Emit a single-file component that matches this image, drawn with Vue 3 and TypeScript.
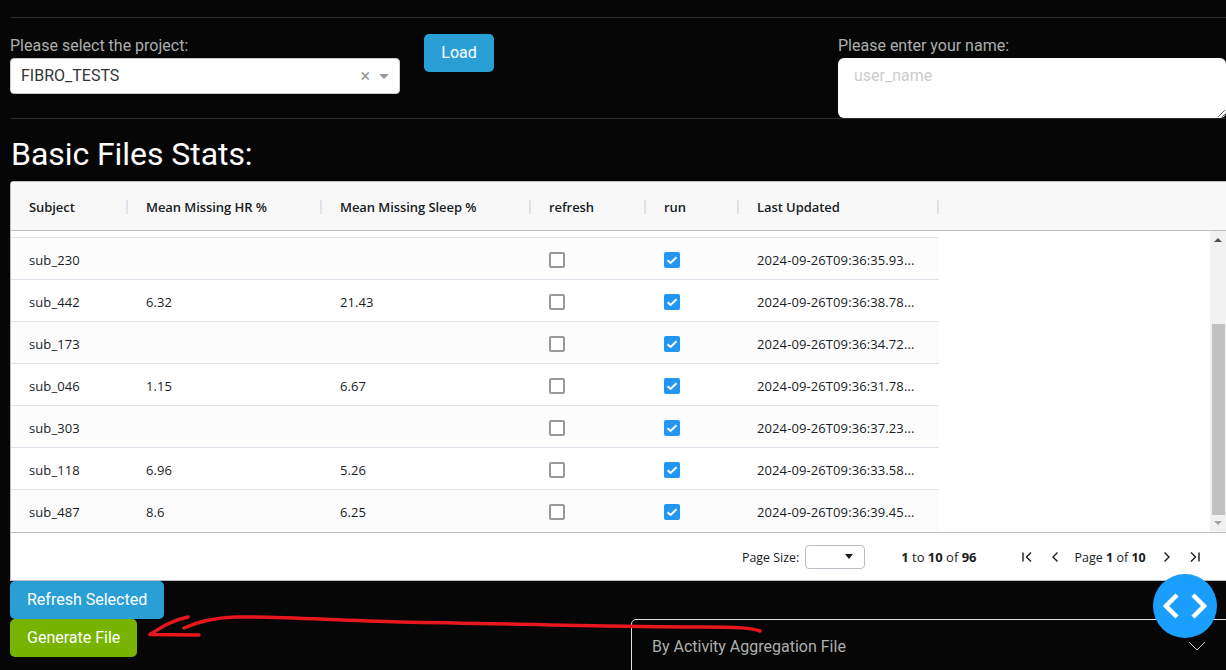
<template>
  <div class="page">
    <hr class="rule" />
    <section class="top-row">
      <div class="project-col">
        <label class="field-label">Please select the project:</label>
        <div class="project-select">
          <span class="project-value">FIBRO_TESTS</span>
          <span class="clear-x">×</span>
          <span class="caret"></span>
        </div>
      </div>
      <button class="btn btn-blue load-btn">Load</button>
      <div class="name-col">
        <label class="field-label">Please enter your name:</label>
        <textarea class="name-input" placeholder="user_name"></textarea>
      </div>
    </section>
    <hr class="rule" />

    <h2 class="title">Basic Files Stats:</h2>

    <div class="grid">
      <div class="grid-header">
        <div v-for="col in columns" :key="col.label" class="head-cell" :style="{ width: col.width + 'px' }">
          {{ col.label }}
        </div>
      </div>
      <div class="grid-body">
        <div class="rows">
          <div v-for="row in rows" :key="row.subject" class="row">
            <div class="cell" :style="{ width: columns[0].width + 'px' }">{{ row.subject }}</div>
            <div class="cell" :style="{ width: columns[1].width + 'px' }">{{ row.hr }}</div>
            <div class="cell" :style="{ width: columns[2].width + 'px' }">{{ row.sleep }}</div>
            <div class="cell" :style="{ width: columns[3].width + 'px' }"><span class="check"></span></div>
            <div class="cell" :style="{ width: columns[4].width + 'px' }">
              <span class="check checked">
                <svg width="16" height="16" viewBox="0 0 16 16">
                  <path d="M3.5 8.2 6.6 11 12.5 5.3" fill="none" stroke="#fff" stroke-width="2" />
                </svg>
              </span>
            </div>
            <div class="cell" :style="{ width: columns[5].width + 'px' }">{{ row.updated }}</div>
          </div>
        </div>
        <div class="scrollbar">
          <span class="arrow arrow-up"></span>
          <span class="thumb"></span>
          <span class="arrow arrow-down"></span>
        </div>
      </div>
      <div class="grid-footer">
        <span>Page Size:</span>
        <span class="size-select"><span class="size-caret"></span></span>
        <span class="row-count"><b>1</b> to <b>10</b> of <b>96</b></span>
        <div class="pager">
          <svg class="pg-icon" width="16" height="16" viewBox="0 0 16 16">
            <path d="M4 3.5v9M12 3.5 7.5 8l4.500 4.500" fill="none" stroke="#181d1f" stroke-width="1.4" />
          </svg>
          <svg class="pg-icon" width="16" height="16" viewBox="0 0 16 16">
            <path d="M10.5 3.5 6 8l4.500 4.500" fill="none" stroke="#181d1f" stroke-width="1.4" />
          </svg>
          <span class="page-text">Page <b>1</b> of <b>10</b></span>
          <svg class="pg-icon" width="16" height="16" viewBox="0 0 16 16">
            <path d="M5.5 3.5 10 8l-4.500 4.500" fill="none" stroke="#181d1f" stroke-width="1.4" />
          </svg>
          <svg class="pg-icon" width="16" height="16" viewBox="0 0 16 16">
            <path d="M12 3.5v9M4 3.5 8.500 8 4 12.500" fill="none" stroke="#181d1f" stroke-width="1.4" />
          </svg>
        </div>
      </div>
    </div>

    <section class="bottom">
      <div class="actions">
        <button class="btn btn-blue">Refresh Selected</button>
        <button class="btn btn-green">Generate File</button>
      </div>
      <div class="accordion">
        <span>By Activity Aggregation File</span>
        <svg class="accordion-chevron" width="18" height="10" viewBox="0 0 18 10">
          <path d="M1 1l8 8 8-8" fill="none" stroke="#c8c8c8" stroke-width="1" />
        </svg>
      </div>
    </section>

    <svg class="scribble" width="1226" height="670" viewBox="0 0 1226 670">
      <path
        d="M760 631C752 628 740 627 700 627C620 627 520 624 400 622C330 620 270 616 235 617C210 618 195 623 184 628M188 617C172 620 160 628 150 634.500L199 635"
        fill="none"
        stroke="#e8161d"
        stroke-width="3.5"
        stroke-linecap="round"
        stroke-linejoin="round"
      />
    </svg>

    <button class="float-btn" aria-label="Toggle dev tools">
      <svg width="44" height="28" viewBox="0 0 44 28">
        <path d="M14 3 3 14l11 11M30 3l11 11-11 11" fill="none" stroke="#fff" stroke-width="4.500" />
      </svg>
    </button>
  </div>
</template>

<script setup lang="ts">
interface Row {
  subject: string;
  hr: string;
  sleep: string;
  updated: string;
}

const columns = [
  { label: "Subject", width: 117 },
  { label: "Mean Missing HR %", width: 194 },
  { label: "Mean Missing Sleep %", width: 209 },
  { label: "refresh", width: 115 },
  { label: "run", width: 93 },
  { label: "Last Updated", width: 200 },
];

const rows: Row[] = [
  { subject: "sub_230", hr: "", sleep: "", updated: "2024-09-26T09:36:35.93..." },
  { subject: "sub_442", hr: "6.32", sleep: "21.43", updated: "2024-09-26T09:36:38.78..." },
  { subject: "sub_173", hr: "", sleep: "", updated: "2024-09-26T09:36:34.72..." },
  { subject: "sub_046", hr: "1.15", sleep: "6.67", updated: "2024-09-26T09:36:31.78..." },
  { subject: "sub_303", hr: "", sleep: "", updated: "2024-09-26T09:36:37.23..." },
  { subject: "sub_118", hr: "6.96", sleep: "5.26", updated: "2024-09-26T09:36:33.58..." },
  { subject: "sub_487", hr: "8.6", sleep: "6.25", updated: "2024-09-26T09:36:39.45..." },
];
</script>

<style scoped>
.page {
  position: relative;
  height: 670px;
  overflow: hidden;
  background: #060606;
  font-family: Roboto, "Liberation Sans", sans-serif;
  font-size: 16px;
  color: #adafae;
}

.rule {
  margin: 0 0 0 10px;
  border: 0;
  border-top: 1px solid #2c2c2c;
}

.page > .rule:first-child {
  margin-top: 17px;
}

.top-row {
  display: flex;
  height: 100px;
  padding-left: 10px;
}

.project-col {
  width: 390px;
  padding-top: 18px;
}

.field-label {
  display: block;
  height: 22px;
  line-height: 19px;
}

.project-select {
  display: flex;
  align-items: center;
  height: 36px;
  padding: 0 10px 2px 10px;
  background: #fff;
  border: 1px solid #ccc;
  border-radius: 4px;
  box-sizing: border-box;
  color: #333;
}

.project-value {
  flex: 1;
}

.clear-x {
  margin-right: 9px;
  font-size: 18px;
  color: #999;
}

.caret {
  width: 0;
  height: 0;
  margin-top: 3px;
  border-left: 5px solid transparent;
  border-right: 5px solid transparent;
  border-top: 5px solid #999;
}

.btn {
  display: block;
  height: 38px;
  padding: 0 17px 2px;
  border: 0;
  border-radius: 5px;
  color: #fff;
  font-family: inherit;
  font-size: 16px;
}

.btn-blue {
  background: #2a9fd6;
}

.btn-green {
  background: #77b300;
}

.load-btn {
  width: 70px;
  margin: 16px 0 0 24px;
  padding: 0 0 2px;
}

.name-col {
  width: 388px;
  margin-left: 344px;
  padding-top: 18px;
}

.name-input {
  display: block;
  width: 100%;
  height: 60px;
  padding: 8px 16px;
  border: 0;
  border-radius: 6px;
  box-sizing: border-box;
  background: #fff;
  font-family: inherit;
  font-size: 16px;
  line-height: 19px;
}

.name-input::placeholder {
  color: #ccc;
  opacity: 1;
}

.title {
  height: 62px;
  margin: 0 0 0 11px;
  font-size: 32px;
  font-weight: 400;
  letter-spacing: -0.06px;
  line-height: 71px;
  color: #fff;
}

.grid {
  width: 1216px;
  height: 400px;
  margin-left: 10px;
  background: #fff;
  border: 1px solid #babfc7;
  border-right: 0;
  border-radius: 4px 0 0 0;
  box-sizing: border-box;
  font-family: "Open Sans", "Noto Sans", sans-serif;
  font-size: 13px;
  color: #181d1f;
}

.grid-header {
  display: flex;
  height: 49px;
  padding-top: 1px;
  background: #f8f8f8;
  border-bottom: 1px solid #babfc7;
  box-sizing: border-box;
}

.head-cell {
  position: relative;
  display: flex;
  align-items: center;
  padding-left: 18px;
  box-sizing: border-box;
  font-weight: 600;
  letter-spacing: -0.07px;
}

.head-cell::after {
  content: "";
  position: absolute;
  top: 17px;
  right: 0;
  width: 2px;
  height: 14px;
  background: #dde2eb;
}

.grid-body {
  display: flex;
  height: 302px;
  border-bottom: 1px solid #babfc7;
  box-sizing: border-box;
}

.rows {
  width: 928px;
  padding-top: 6px;
}

.row {
  display: flex;
  height: 42px;
  background: #fff;
  border-bottom: 1px solid #dde2eb;
  box-sizing: border-box;
}

.rows .row:first-child {
  height: 43px;
  border-top: 1px solid #dde2eb;
}

.row:nth-child(odd) {
  background: #fcfcfc;
}

.row:last-child {
  border-bottom-color: transparent;
}

.cell {
  display: flex;
  align-items: center;
  padding: 3px 0 0 18px;
  box-sizing: border-box;
  min-width: 0;
  letter-spacing: 0.1px;
  white-space: nowrap;
}

.check {
  display: block;
  width: 16px;
  height: 16px;
  border: 2px solid #999;
  border-radius: 2px;
  box-sizing: border-box;
  background: #fff;
}

.check.checked {
  border: 0;
  background: #2196f3;
}

.check svg {
  display: block;
}

.scrollbar {
  display: flex;
  flex-direction: column;
  align-items: center;
  width: 16px;
  margin-left: auto;
  background: #f1f1f1;
}

.arrow {
  display: block;
  width: 0;
  height: 0;
  border-left: 4px solid transparent;
  border-right: 4px solid transparent;
}

.arrow-up {
  margin-top: 7px;
  border-bottom: 4px solid #505050;
}

.thumb {
  width: 13px;
  height: 191px;
  margin-top: 82px;
  background: #c1c1c1;
}

.arrow-down {
  margin-top: 6px;
  border-top: 4px solid #a3a3a3;
}

.grid-footer {
  display: flex;
  align-items: center;
  height: 47px;
  padding: 1px 0 0 731px;
  font-size: 12.4px;
  box-sizing: border-box;
}

.size-select {
  position: relative;
  display: block;
  width: 60px;
  height: 24px;
  margin-left: 6px;
  border: 1px solid #babfc7;
  border-radius: 4px;
  box-sizing: border-box;
}

.size-caret {
  position: absolute;
  top: 8px;
  right: 11px;
  width: 0;
  height: 0;
  border-left: 4px solid transparent;
  border-right: 4px solid transparent;
  border-top: 5px solid #181d1f;
}

.row-count {
  margin-left: 36px;
  font-size: 13px;
}

.row-count b,
.page-text b {
  font-weight: 700;
}

.pager {
  display: flex;
  align-items: center;
  margin-left: 42px;
}

.pg-icon {
  margin-right: 12px;
}

.page-text {
  margin: 0 13px 0 0;
  font-size: 12.5px;
}

.bottom {
  display: flex;
  padding-left: 10px;
}

.actions {
  display: flex;
  flex-direction: column;
  align-items: flex-start;
  flex: none;
  width: 621px;
}

.accordion {
  position: relative;
  width: 640px;
  height: 80px;
  margin-top: 38px;
  padding: 17px 20px;
  flex: none;
  border: 1px solid #dee2e6;
  border-radius: 5px;
  box-sizing: border-box;
}

.accordion-chevron {
  position: absolute;
  top: 21px;
  left: 556px;
}

.scribble {
  position: absolute;
  top: 0;
  left: 0;
  pointer-events: none;
}

.float-btn {
  position: absolute;
  top: 574px;
  left: 1153px;
  display: flex;
  align-items: center;
  justify-content: center;
  width: 64px;
  height: 64px;
  padding: 0;
  border: 0;
  border-radius: 50%;
  background: #1a9fff;
}
</style>

<style>
html,
body {
  margin: 0;
  overflow: hidden;
  background: #060606;
}
</style>
